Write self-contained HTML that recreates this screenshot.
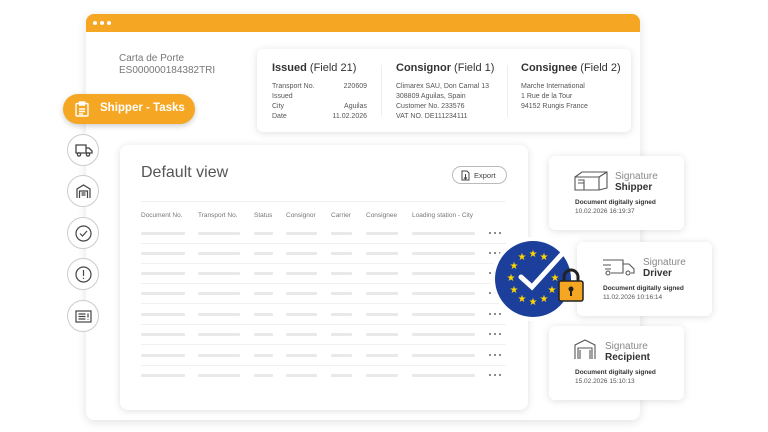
<!DOCTYPE html>
<html><head><meta charset="utf-8"><style>
*{margin:0;padding:0;box-sizing:border-box}
body{width:768px;height:432px;background:#fff;position:relative;overflow:hidden;font-family:"Liberation Sans",sans-serif;color:#444}
.abs{position:absolute}
.win{left:86px;top:14px;width:554px;height:406px;background:#fff;border-radius:8px;box-shadow:0 2px 10px rgba(0,0,0,.12);overflow:hidden}
.bar{left:0;top:0;width:554px;height:18px;background:#f5a623}
.dot{width:4px;height:4px;border-radius:50%;background:#fff;top:7px}
.card{background:#fff;border-radius:6px;box-shadow:0 1px 8px rgba(0,0,0,.13)}
.t9{font-size:7px;line-height:10px;color:#555}
h3{font-size:11px;font-weight:normal;color:#333}
h3 b{font-weight:bold}
.circ{width:32px;height:32px;border-radius:50%;border:1px solid #ccc;background:#fff;left:67px}
.bl{height:3px;background:#e9e9ec;border-radius:1px}
.row{height:1px;background:#f0f0f0}
.hd{font-size:6.5px;color:#777;top:212px}
.d{width:2px;height:2px;border-radius:50%;background:#666}
.sig{width:135px;height:74px}
.sig .s1{font-size:10px;color:#888;position:absolute;line-height:11px}
.sig .s2{font-size:10px;color:#333;font-weight:bold;position:absolute;line-height:11px}
.sig .s3{font-size:6.5px;color:#333;font-weight:bold;position:absolute;left:26px}
.sig .s4{font-size:6.5px;color:#555;position:absolute;left:26px}
</style></head><body>
<div class="abs win">
 <div class="abs bar"></div>
 <div class="abs dot" style="left:7px"></div><div class="abs dot" style="left:14px"></div><div class="abs dot" style="left:21px"></div>
 <div class="abs" style="left:33px;top:39px;font-size:10px;line-height:12px;color:#777">Carta de Porte<br>ES000000184382TRI</div>
</div>
<div class="abs card" style="left:257px;top:49px;width:374px;height:83px">
 <div class="abs" style="left:15px;top:13px"><h3><b>Issued</b> (Field 21)</h3></div>
 <div class="abs t9" style="left:15px;top:33px;width:95px">Transport No.<span style="float:right">220609</span><br>Issued<br>City<span style="float:right">Aguilas</span><br>Date<span style="float:right">11.02.2026</span></div>
 <div class="abs" style="left:124px;top:16px;width:1px;height:52px;background:#eee"></div>
 <div class="abs" style="left:139px;top:13px"><h3><b>Consignor</b> (Field 1)</h3></div>
 <div class="abs t9" style="left:139px;top:33px">Climarex SAU, Don Carnal 13<br>308809 Aguilas, Spain<br>Customer No. 233576<br>VAT NO. DE111234111</div>
 <div class="abs" style="left:250px;top:16px;width:1px;height:52px;background:#eee"></div>
 <div class="abs" style="left:264px;top:13px"><h3><b>Consignee</b> (Field 2)</h3></div>
 <div class="abs t9" style="left:264px;top:33px">Marche International<br>1 Rue de la Tour<br>94152 Rungis France</div>
</div>
<div class="abs" style="left:63px;top:94px;width:132px;height:30px;border-radius:15px;background:#f5a623;box-shadow:0 2px 6px rgba(0,0,0,.2)">
 <svg class="abs" style="left:12px;top:7px" width="14" height="16" viewBox="0 0 14 16" fill="none" stroke="#fff" stroke-width="1.4"><rect x="1" y="2.5" width="12" height="12.5" rx="1"/><rect x="4.5" y="1" width="5" height="3" fill="#fff"/><path d="M4 8h6M4 10.5h6M4 13h4"/></svg>
 <div class="abs" style="left:37px;top:8px;font-size:11.5px;font-weight:bold;color:#fff">Shipper - Tasks</div>
</div>
<div class="abs circ" style="top:134px"><svg class="abs" style="left:7px;top:9px" width="18" height="13" viewBox="0 0 18 13" fill="none" stroke="#444" stroke-width="1.3"><path d="M1 1h10v8H1zM11 4h3l3 3v2h-6"/><circle cx="4" cy="10.5" r="1.6" fill="#fff"/><circle cx="13" cy="10.5" r="1.6" fill="#fff"/></svg></div>
<div class="abs circ" style="top:175px"><svg class="abs" style="left:8px;top:8px" width="15" height="14" viewBox="0 0 15 14" fill="none" stroke="#444" stroke-width="1.2"><path d="M1 14V5L7.5 1 14 5v9M3.5 14V7h8v7M5.5 9h4M5.5 11h4"/></svg></div>
<div class="abs circ" style="top:217px"><svg class="abs" style="left:7px;top:7px" width="17" height="17" viewBox="0 0 17 17" fill="none" stroke="#444" stroke-width="1.2"><circle cx="8.5" cy="8.5" r="7.5"/><path d="M5 8.5l2.5 2.5 4.5-5"/></svg></div>
<div class="abs circ" style="top:258px"><svg class="abs" style="left:7px;top:7px" width="17" height="17" viewBox="0 0 17 17" fill="none" stroke="#444" stroke-width="1.2"><circle cx="8.5" cy="8.5" r="7.5"/><path d="M8.5 4v6M8.5 11.8v1.2"/></svg></div>
<div class="abs circ" style="top:300px"><svg class="abs" style="left:7px;top:9px" width="17" height="13" viewBox="0 0 17 13" fill="none" stroke="#444" stroke-width="1.2"><rect x="1" y="1" width="15" height="11"/><path d="M3.5 4h7M3.5 6.5h7M3.5 9h7M13 3.5v4M13 9v.8"/></svg></div>
<div class="abs card" style="left:120px;top:145px;width:408px;height:265px;border-radius:8px">
 <div class="abs" style="left:21px;top:19px;font-size:16px;color:#555">Default view</div>
 <div class="abs" style="left:332px;top:21px;width:55px;height:18px;border:1px solid #bbb;border-radius:9px;font-size:7.5px;color:#444;padding:4px 0 0 21px">Export
  <svg class="abs" style="left:8px;top:3px" width="9" height="11" viewBox="0 0 9 11" fill="none" stroke="#444" stroke-width="1"><path d="M1 1h5l2 2v7H1zM4.5 4v5M3 7.5l1.5 1.5 1.5-1.5"/></svg></div>
 <div class="abs row" style="left:21px;top:56px;width:365px"></div>
</div>
<div class="abs hd" style="left:141px">Document No.</div>
<div class="abs hd" style="left:198px">Transport No.</div>
<div class="abs hd" style="left:254px">Status</div>
<div class="abs hd" style="left:286px">Consignor</div>
<div class="abs hd" style="left:331px">Carrier</div>
<div class="abs hd" style="left:366px">Consignee</div>
<div class="abs hd" style="left:412px">Loading station - City</div>
<div id="rows"></div>
<script>
var ys=[232,252,272,292,313,333,354,374],h='';
var cols=[[141,44],[198,42],[254,19],[286,31],[331,21],[366,32],[412,63]];
ys.forEach(function(y,i){cols.forEach(function(c){h+='<div class="abs bl" style="left:'+c[0]+'px;top:'+y+'px;width:'+c[1]+'px"></div>'});
[489,494,499].forEach(function(x){h+='<div class="abs d" style="left:'+x+'px;top:'+(y)+'px"></div>'});
if(i<7)h+='<div class="abs row" style="left:141px;top:'+(y+11)+'px;width:365px"></div>';});
document.getElementById('rows').innerHTML=h;
</script>
<div class="abs card sig" style="left:549px;top:156px">
 <svg class="abs" style="left:25px;top:15px" width="34" height="20" viewBox="0 0 34 20" fill="none" stroke="#555" stroke-width="1.1"><path d="M1 6L8 1h25v16l-8 2H1zM25 19V6H1M25 6l8-5M4 9h6v10M4 12h6"/></svg>
 <div class="s1" style="left:66px;top:15px">Signature</div><div class="s2" style="left:66px;top:26px">Shipper</div>
 <div class="s3" style="top:43px">Document digitally signed</div><div class="s4" style="top:52px">10.02.2026 16:19:37</div>
</div>
<div class="abs card sig" style="left:577px;top:242px">
 <svg class="abs" style="left:25px;top:15px" width="34" height="20" viewBox="0 0 34 20" fill="none" stroke="#555" stroke-width="1.1"><path d="M1 3h20v13H9M21 7h6l5 5v4h-3M1 8h8M3 12h6"/><circle cx="6" cy="16" r="2"/><circle cx="26" cy="16" r="2"/></svg>
 <div class="s1" style="left:66px;top:15px">Signature</div><div class="s2" style="left:66px;top:26px">Driver</div>
 <div class="s3" style="top:43px">Document digitally signed</div><div class="s4" style="top:52px">11.02.2026 10:16:14</div>
</div>
<div class="abs card sig" style="left:549px;top:326px">
 <svg class="abs" style="left:25px;top:13px" width="22" height="20" viewBox="0 0 22 20" fill="none" stroke="#555" stroke-width="1.1"><path d="M1 20V6L11 1l10 5v14M4 20V9h14v11M6 20V11M16 20V11"/></svg>
 <div class="s1" style="left:56px;top:15px">Signature</div><div class="s2" style="left:56px;top:26px">Recipient</div>
 <div class="s3" style="top:43px">Document digitally signed</div><div class="s4" style="top:52px">15.02.2026 15:10:13</div>
</div>
<svg class="abs" style="left:490px;top:236px" width="100" height="90" viewBox="0 0 100 90">
 <circle cx="43" cy="43" r="42" fill="#fff" opacity=".9"/>
 <circle cx="43" cy="43" r="38" fill="#1b3f9a"/>
 <g fill="#ffd500" font-size="10" font-family="DejaVu Sans" text-anchor="middle">
  <text x="43" y="21">★</text><text x="54" y="24">★</text><text x="32" y="24">★</text>
  <text x="24" y="33">★</text><text x="21" y="45">★</text><text x="24" y="57">★</text>
  <text x="32" y="66">★</text><text x="43" y="69">★</text><text x="54" y="66">★</text>
  <text x="62" y="57">★</text><text x="65" y="45">★</text>
 </g>
 <path d="M31 41l11 10 30-33" fill="none" stroke="#fff" stroke-width="5" stroke-linecap="round"/>
 <path d="M74 45v-4a7 7 0 0 1 14 0v4" fill="none" stroke="#222" stroke-width="3"/>
 <rect x="69" y="45" width="24" height="20" rx="2" fill="#f5a623" stroke="#222" stroke-width="1.5"/>
 <circle cx="81" cy="53" r="2.5" fill="#222"/><rect x="80" y="54" width="2" height="6" fill="#222"/>
</svg>
</body></html>
